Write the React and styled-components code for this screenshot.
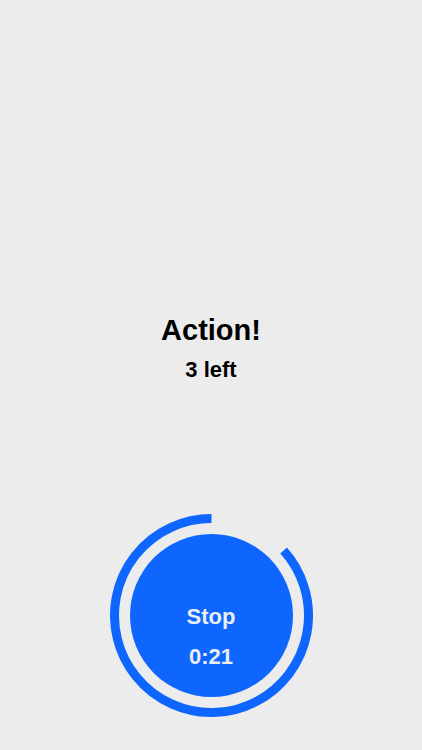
import React from 'react';
import styled, { createGlobalStyle } from 'styled-components';

const GlobalStyle = createGlobalStyle`
  html, body {
    margin: 0;
    padding: 0;
    background: #ececec;
  }
  body {
    font-family: "Liberation Sans", Arial, sans-serif;
  }
`;

const Screen = styled.div`
  display: flex;
  flex-direction: column;
  align-items: center;
  height: 750px;
  background: #ececec;
  overflow: hidden;
`;

const Title = styled.h1`
  margin: 314px 0 0;
  font-size: 29px;
  line-height: 33px;
  font-weight: 700;
  color: #000;
`;

const Remaining = styled.p`
  margin: 10px 0 0;
  font-size: 22px;
  line-height: 26px;
  font-weight: 700;
  color: #000;
`;

const Timer = styled.div`
  display: grid;
  width: 203px;
  height: 203px;
  margin-top: 131px;

  & > * {
    grid-area: 1 / 1;
  }
`;

const Ring = styled.svg`
  width: 203px;
  height: 203px;
`;

const StopButton = styled.button`
  align-self: center;
  justify-self: center;
  display: flex;
  flex-direction: column;
  align-items: center;
  gap: 14px;
  box-sizing: border-box;
  width: 163px;
  height: 163px;
  padding: 70px 0 0;
  border: none;
  border-radius: 50%;
  background: #0e66fe;
  color: #e9eef7;
  font-family: "Liberation Sans", Arial, sans-serif;
  font-size: 22px;
  line-height: 26px;
  font-weight: 700;
  cursor: pointer;
`;

const Line = styled.span`
  display: block;
`;

// progress goes from the top round to the left, gap left on the upper right
function ProgressRing({ size = 203, stroke = 9, gapDeg = 48 }) {
  const c = size / 2;
  const r = (size - stroke) / 2;
  const a = (gapDeg * Math.PI) / 180;
  const ex = c + r * Math.sin(a);
  const ey = c - r * Math.cos(a);
  return (
    <Ring viewBox={`0 0 ${size} ${size}`}>
      <path
        d={`M ${c} ${c - r} A ${r} ${r} 0 1 0 ${ex} ${ey}`}
        fill="none"
        stroke="#0e66fe"
        strokeWidth={stroke}
      />
    </Ring>
  );
}

export default function App() {
  return (
    <Screen>
      <GlobalStyle />
      <Title>Action!</Title>
      <Remaining>3 left</Remaining>
      <Timer>
        <ProgressRing />
        <StopButton>
          <Line>Stop</Line>
          <Line>0:21</Line>
        </StopButton>
      </Timer>
    </Screen>
  );
}
